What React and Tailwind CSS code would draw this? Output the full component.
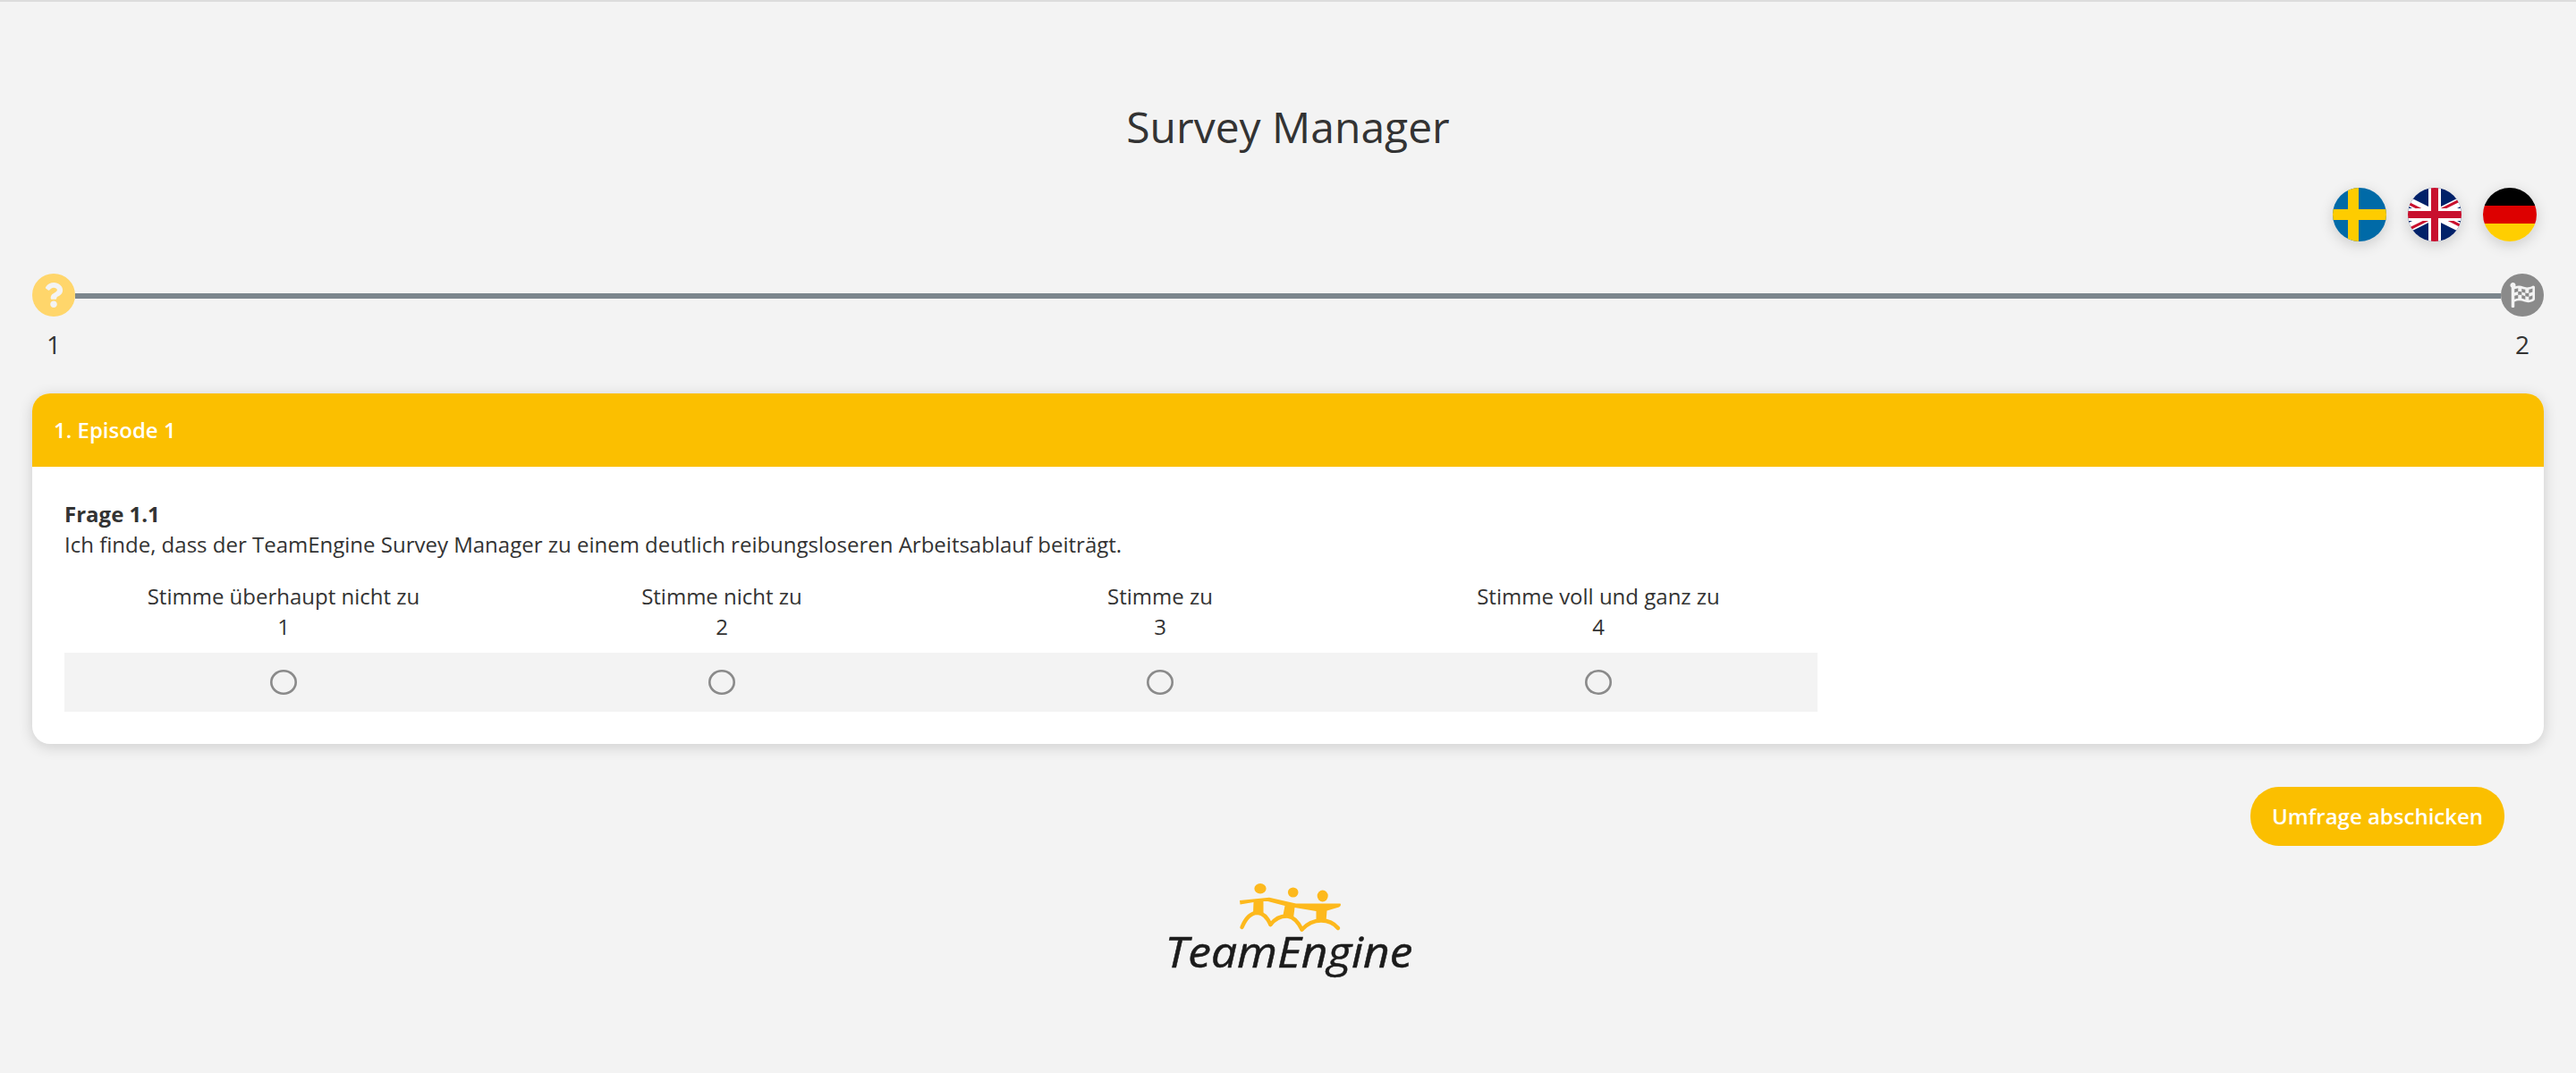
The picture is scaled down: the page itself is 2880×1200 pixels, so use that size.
import { FaFlagCheckered, FaQuestion } from "react-icons/fa";

function Flag({ children, label }) {
  return (
    <button aria-label={label} className="size-[60px] overflow-hidden rounded-full shadow-[0_4px_16px_rgba(0,0,0,0.16)]">
      <svg viewBox="0 0 60 60" className="block size-full">{children}</svg>
    </button>
  );
}

function Flags() {
  return (
    <div className="mt-[33px] flex justify-end gap-6 pr-2">
      <Flag label="Svenska">
        <path fill="#006aa7" d="M0 0h60v60H0z" />
        <path fill="#fecc00" d="M17 0h12v60H17zM0 24h60v12H0z" />
      </Flag>
      <Flag label="English">
        <path fill="#012169" d="M0 0h60v60H0z" />
        <path stroke="#fff" strokeWidth="10" d="M-30 0L90 60M-30 60L90 0" />
        <path stroke="#c8102e" strokeWidth="3" d="M-30 2L30 32M30 28L90 58M-30 62L30 32M30 28L90 -2" />
        <path fill="#fff" d="M23 0h14v60H23zM0 23h60v14H0z" />
        <path fill="#c8102e" d="M26 0h8v60h-8zM0 26h60v8H0z" />
      </Flag>
      <Flag label="Deutsch">
        <path fill="#000" d="M0 0h60v20H0z" />
        <path fill="#d00" d="M0 20h60v20H0z" />
        <path fill="#ffce00" d="M0 40h60v20H0z" />
      </Flag>
    </div>
  );
}

function Progress() {
  return (
    <div className="mt-9 flex items-start">
      <div className="flex w-12 flex-col items-center">
        <div className="flex size-12 items-center justify-center rounded-full bg-[#ffd66b] text-[#f3f3f3]">
          <FaQuestion size={28} />
        </div>
        <span className="mt-3 text-[28px] leading-[38px]">1</span>
      </div>
      <div className="mt-[22px] h-1.5 flex-1 bg-[#7c868d]" />
      <div className="flex w-12 flex-col items-center">
        <div className="flex size-12 items-center justify-center rounded-full bg-[#8a8a8a] text-[#f3f3f3]">
          <FaFlagCheckered size={28} />
        </div>
        <span className="mt-3 text-[28px] leading-[38px]">2</span>
      </div>
    </div>
  );
}

const answers = ["Stimme überhaupt nicht zu", "Stimme nicht zu", "Stimme zu", "Stimme voll und ganz zu"];

function Episode() {
  return (
    <section className="mt-9 overflow-hidden rounded-[20px] bg-white shadow-[0_3px_16px_rgba(0,0,0,0.16)]">
      <h2 className="flex h-[82px] items-center bg-[#fbbf00] px-6 pb-px leading-[33px] font-semibold text-white">1. Episode 1</h2>
      <div className="h-[310px] px-9 pt-[35.5px]">
        <p className="font-bold">Frage 1.1</p>
        <p>Ich finde, dass der TeamEngine Survey Manager zu einem deutlich reibungsloseren Arbeitsablauf beiträgt.</p>
        <div className="mt-6 grid w-[1960px] grid-cols-4 text-center">
          {answers.map((answer, i) => (
            <label key={answer} className="flex flex-col">
              <span>{answer}</span>
              <span>{i + 1}</span>
              <span className="mt-[12.5px] flex h-[66px] items-center justify-center bg-[#f3f3f3]">
                <input type="radio" name="q1" className="h-7 w-[30px] appearance-none rounded-[50%] shadow-[inset_0_0_0_2.6px_#8a8a8a]" />
              </span>
            </label>
          ))}
        </div>
      </div>
    </section>
  );
}

function Logo() {
  return (
    <svg viewBox="0 0 280 112" className="mx-auto mt-10 block h-[112px] w-[280px]" role="img" aria-label="TeamEngine">
      <g fill="#fdb91d">
        <ellipse cx="109" cy="7.700" rx="6.600" ry="5.700" />
        <ellipse cx="145.700" cy="12" rx="5.800" ry="5.600" />
        <ellipse cx="178.700" cy="16" rx="6" ry="6.400" />
        <path d="M86 21 L119 17.700 L149 24.500 L198.500 24.500 Q200 27 197 28.500 L183.500 32.500 L182.500 45 L171.500 45 L171.500 33 L147.500 29 L146 41 L134 40 L136.500 27 L117.500 22 L112.500 22 L112.500 36 L101 36 L101.500 23 L86.500 25.500 Z" />
      </g>
      <g fill="none" stroke="#fdb91d" strokeWidth="4.400" strokeLinecap="round" strokeLinejoin="round">
        <path d="M88.500 51 Q95 35 106 34.700 Q115 35.500 120.500 48" />
        <path d="M120.500 48 Q128 38 139.500 38.500 Q149 40 155.500 53.500" />
        <path d="M155.500 53.500 Q165 43.500 177 43.500 Q189 43.500 196 52" />
      </g>
      <text x="2.500" y="95.500" fill="#1b1b1b" stroke="#1b1b1b" strokeWidth="0.500" fontSize="47" fontStyle="italic" textLength="277" lengthAdjust="spacingAndGlyphs">TeamEngine</text>
    </svg>
  );
}

export default function App() {
  return (
    <main className="h-[1200px] border-t-2 border-[#dcdcdc] bg-[#f3f3f3] px-9 font-['Open_Sans',sans-serif] text-[24px] leading-[34px] text-[#333]">
      <h1 className="pt-[104px] text-center text-[48px] leading-[71px]">Survey Manager</h1>
      <Flags />
      <Progress />
      <Episode />
      <div className="mt-12 flex justify-end pr-11">
        <button className="flex h-[66px] w-[284px] items-center justify-center rounded-[32px] bg-[#fbbf00] pb-px leading-[33px] font-semibold text-white">Umfrage abschicken</button>
      </div>
      <Logo />
    </main>
  );
}
